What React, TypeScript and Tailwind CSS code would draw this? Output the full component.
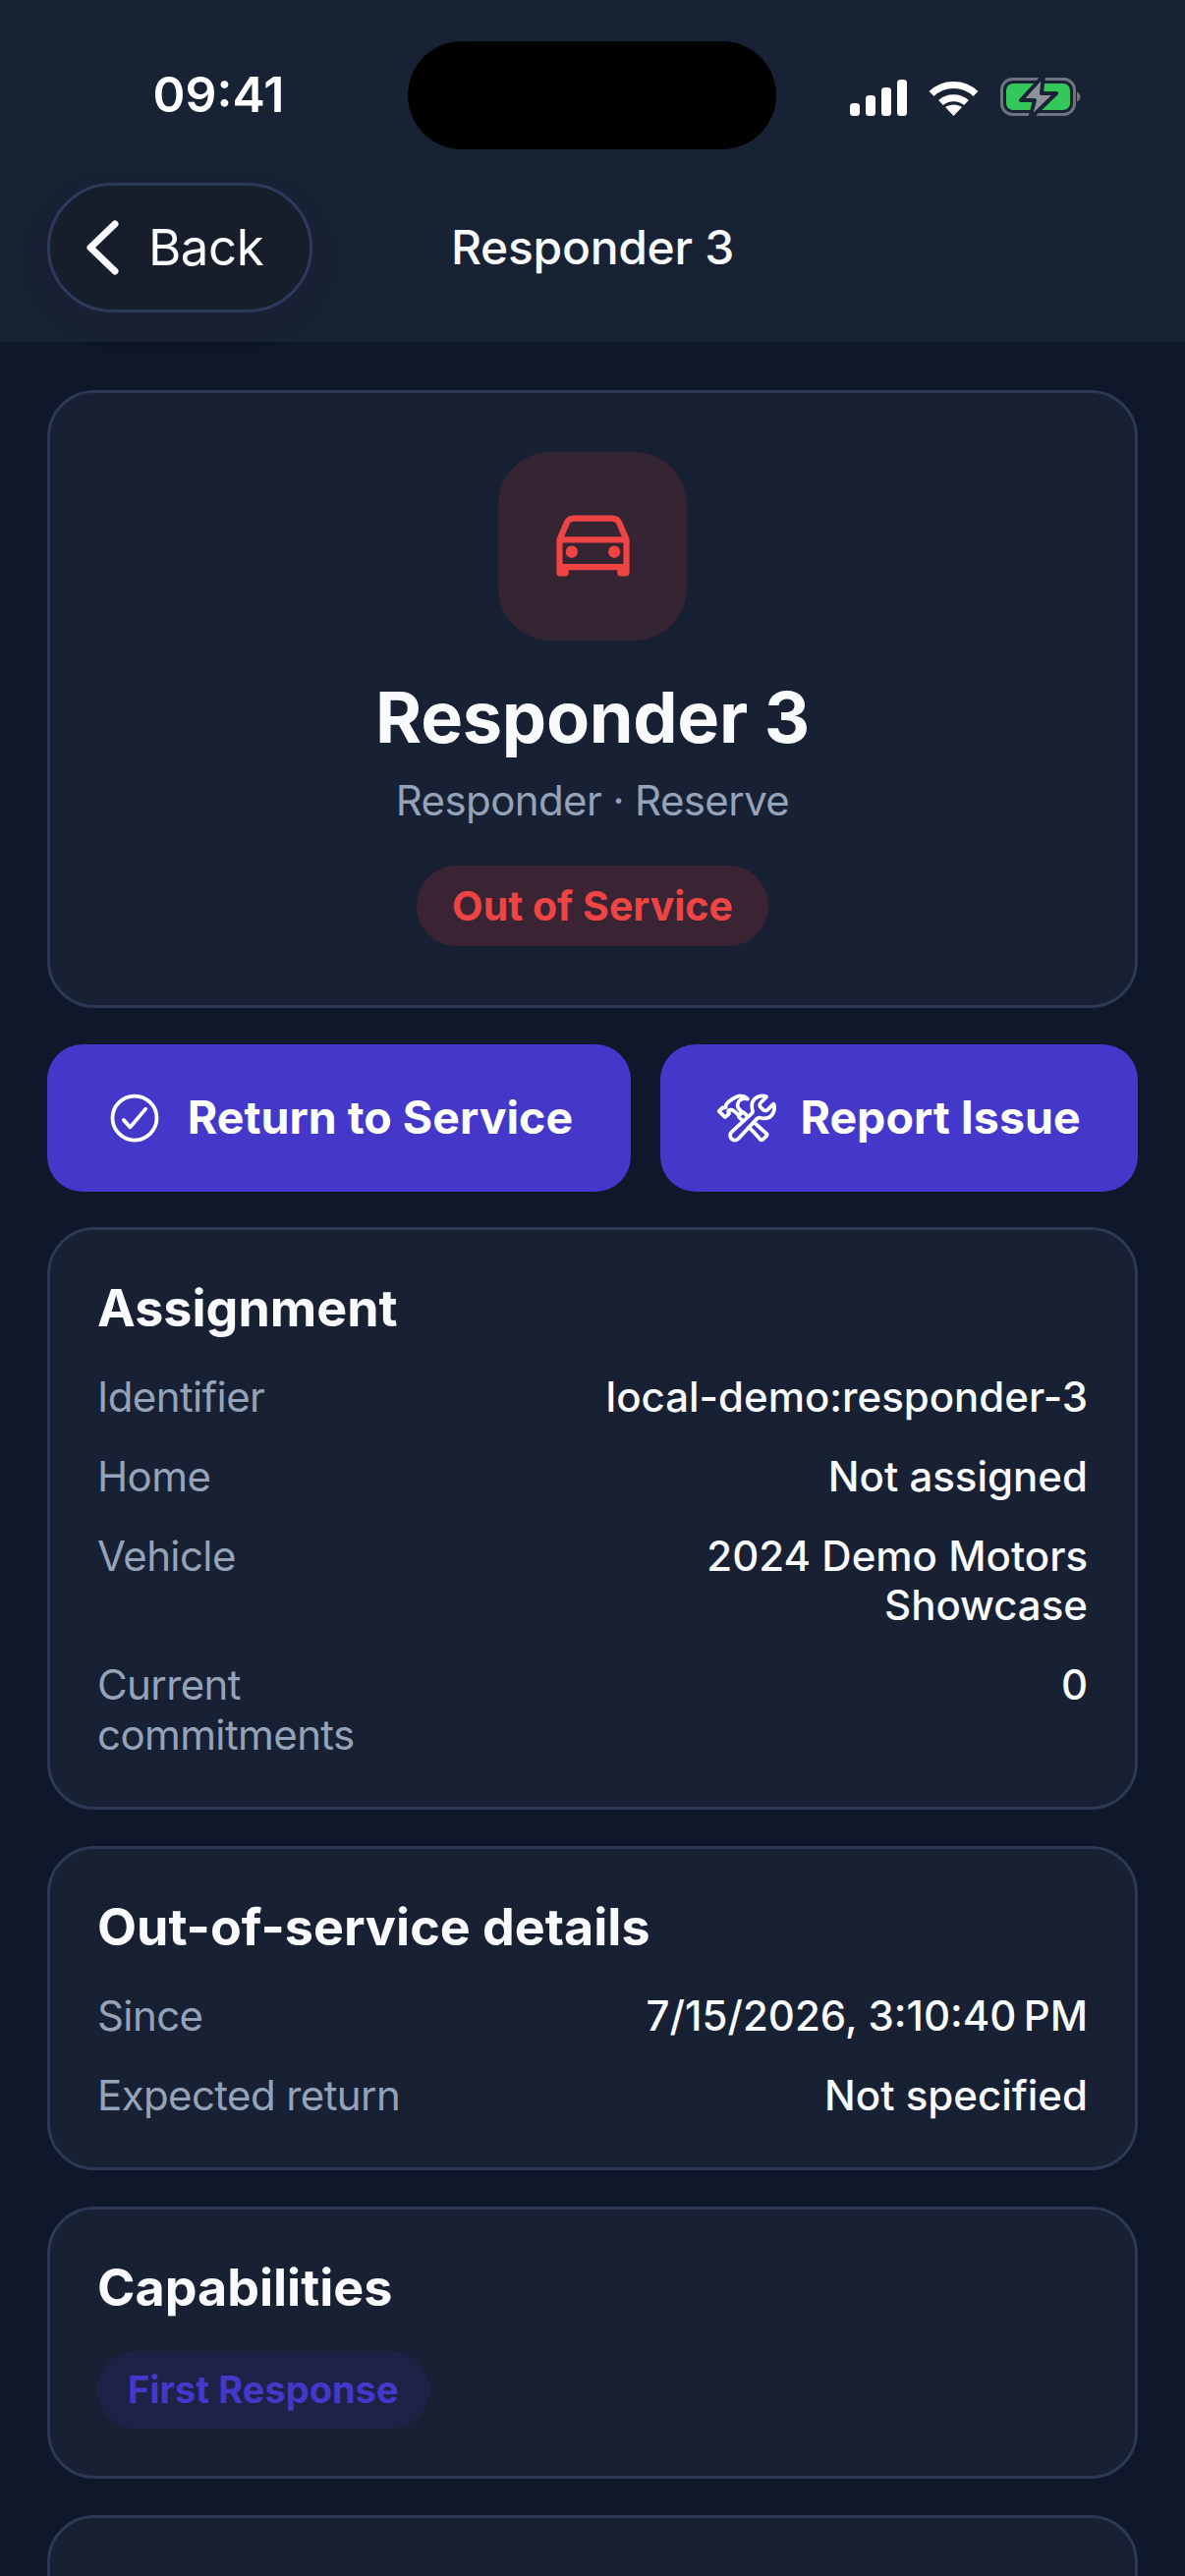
import { IoCarOutline, IoCheckmarkCircleOutline, IoConstructOutline } from 'react-icons/io5';

const assignment = [
  { label: 'Identifier', value: 'local-demo:responder-3' },
  { label: 'Home', value: 'Not assigned' },
  { label: 'Vehicle', value: '2024 Demo Motors Showcase' },
  { label: 'Current commitments', value: '0' },
];

const outOfService = [
  { label: 'Since', value: '7/15/2026, 3:10:40\u202fPM' },
  { label: 'Expected return', value: 'Not specified' },
];

const Row = ({ label, value }: { label: string; value: string }) => (
  <div className="flex justify-between gap-6 text-[42px] leading-[50.4px]">
    <span className="w-[400px] shrink-0 tracking-[-0.6px] text-[#94a3b8]">{label}</span>
    <span className="flex-1 text-right font-medium text-[#f8fafc]">{value}</span>
  </div>
);

const Card = ({ title, children }: { title?: string; children: React.ReactNode }) => (
  <section className="rounded-[48px] border-[3px] border-[#2c3854] bg-[#182134] p-12">
    {title && <h2 className="mb-[32px] text-[52px] leading-[64.8px] font-bold text-[#f8fafc]">{title}</h2>}
    {children}
  </section>
);

const StatusIcons = () => (
  <div className="flex items-center gap-[22px]">
    {/* Signal */}
    <svg width="58" height="37" viewBox="0 0 58 37" fill="#fff">
      <rect x="0" y="24" width="10" height="13" rx="3.5" />
      <rect x="16" y="16" width="10" height="21" rx="3.5" />
      <rect x="32" y="8" width="10" height="29" rx="3.5" />
      <rect x="48" y="0" width="10" height="37" rx="3.5" />
    </svg>
    {/* Wifi */}
    <svg width="51" height="37" viewBox="0 0 51 37" fill="none" stroke="#fff" strokeWidth="7">
      <path d="M3 14.500C15.500 2.500 35.500 2.500 48 14.500" />
      <path d="M12.500 23.500C19.500 17 31.500 17 38.500 23.500" />
      <path d="M17 28L25.500 37L34 28C29 24.500 22 24.500 17 28Z" fill="#fff" stroke="none" />
    </svg>
    {/* Battery */}
    <svg width="82" height="44" viewBox="0 0 82 44" fill="none">
      <rect x="1.5" y="3.5" width="74" height="36" rx="11" stroke="#6f7480" strokeWidth="3" />
      <rect x="6" y="8" width="65" height="27" rx="7" fill="#34c759" />
      <path d="M78 16.500C80.500 17.500 81.500 19.500 81.500 21.500C81.500 23.500 80.500 25.500 78 26.500Z" fill="#6f7480" />
      <path d="M44 0L21 25H35L30 44L57 18H42Z" fill="#8e9199" stroke="#182235" strokeWidth="4" strokeLinejoin="round" />
    </svg>
  </div>
);

export default function App() {
  return (
    <div className="flex h-[2622px] flex-col overflow-hidden bg-[#0f172a] font-['Inter',sans-serif]">
      {/* Header */}
      <header className="h-[348px] shrink-0 bg-[#182235]">
        <div className="grid h-[186px] grid-cols-[415px_375px_1fr] items-start pt-[42px]">
          <div className="pl-[30px] text-center text-[50px] leading-[108px] font-semibold text-white">09:41</div>
          <div className="h-[110px] rounded-full bg-black" />
          <div className="mt-[35px] pl-[75px]">
            <StatusIcons />
          </div>
        </div>
        <div className="grid grid-cols-[1fr_auto_1fr] items-center px-12">
          <button className="flex h-[132px] w-[270px] items-center gap-[30px] rounded-full border-[3px] border-[#2c3a5c] bg-[#171e2b] pl-[37px] shadow-[0_12px_30px_rgba(60,20,40,0.12)]">
            <svg width="33" height="56" viewBox="0 0 33 56" fill="none" stroke="#f8fafc" strokeWidth="7" strokeLinecap="round" strokeLinejoin="round">
              <path d="M29 4L4 28L29 52" />
            </svg>
            <span className="text-[51px] tracking-[-0.5px] text-[#f8fafc]">Back</span>
          </button>
          <h1 className="text-[48px] font-medium tracking-[-0.3px] text-[#f8fafc]">Responder 3</h1>
          <div />
        </div>
      </header>

      {/* Content */}
      <main className="flex flex-col gap-[36.6px] px-12 pt-[48.5px]">
        <section className="flex flex-col items-center rounded-[48px] border-[3px] border-[#2c3854] bg-[#182134] py-[60px]">
          <div className="flex h-[192px] w-[192px] items-center justify-center rounded-[54px] bg-[#352533] text-[#ef4444]">
            <IoCarOutline size={99} />
          </div>
          <div className="mt-[34px] text-[72px] leading-[88px] font-bold tracking-[-0.3px] text-[#f8fafc]">Responder 3</div>
          <div className="mt-[16px] text-[42px] leading-[50.4px] tracking-[-0.6px] text-[#94a3b8]">Responder · Reserve</div>
          <div className="mt-[41px] rounded-full bg-[#3a2433] px-9 py-[16px] text-[41px] leading-[50px] font-bold text-[#ef4444]">Out of Service</div>
        </section>

        <div className="flex gap-[30px]">
          <button className="flex h-[150px] w-[594px] shrink-0 items-center justify-center gap-6 rounded-[36px] bg-[#4338ca] text-[46.5px] font-bold text-white">
            <IoCheckmarkCircleOutline size={60} />
            Return to Service
          </button>
          <button className="flex h-[150px] flex-1 items-center justify-center gap-6 rounded-[36px] bg-[#4338ca] text-[46.5px] font-bold text-white">
            <IoConstructOutline size={60} />
            Report Issue
          </button>
        </div>

        <Card title="Assignment">
          <div className="flex flex-col gap-[30.6px]">
            {assignment.map((row) => (
              <Row key={row.label} {...row} />
            ))}
          </div>
        </Card>

        <Card title="Out-of-service details">
          <div className="flex flex-col gap-[30.6px]">
            {outOfService.map((row) => (
              <Row key={row.label} {...row} />
            ))}
          </div>
        </Card>

        <Card title="Capabilities">
          <div className="flex">
            <span className="rounded-full bg-[#1e2247] px-[31px] py-[18px] text-[38px] leading-[43px] font-bold text-[#4338ca]">First Response</span>
          </div>
        </Card>

        <Card>
          <div className="h-[200px]" />
        </Card>
      </main>
    </div>
  );
}
